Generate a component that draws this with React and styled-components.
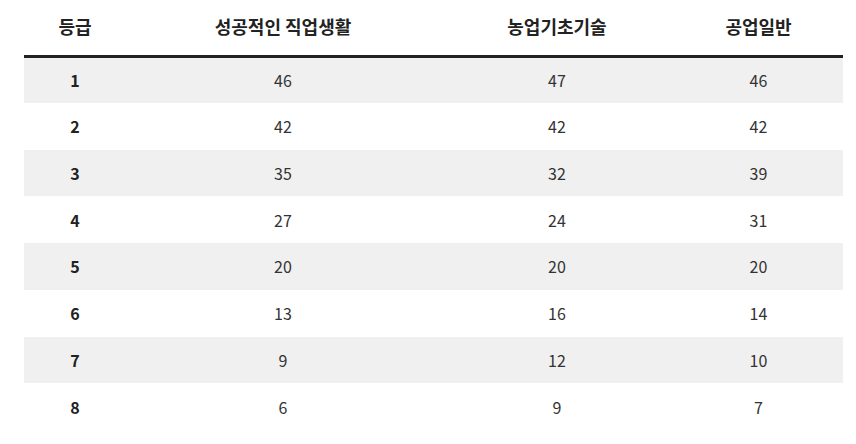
import React from "react";
import styled, { createGlobalStyle } from "styled-components";

const Global = createGlobalStyle`
  html, body { margin: 0; padding: 0; background: #fff; }
  body { font-family: "Noto Sans CJK KR", "Noto Sans", sans-serif; color: #333; }
`;

const Wrap = styled.div`
  padding: 0 13px 0 24px;
`;

const Table = styled.table`
  width: 819px;
  border-collapse: collapse;
  table-layout: fixed;
  font-size: 16px;
`;

const HeadCell = styled.th`
  height: 56px;
  padding: 0 0 2px;
  font-size: 18px;
  font-weight: 700;
  color: #222;
  text-align: center;
  border-bottom: 3px solid #222;
  box-sizing: border-box;
  width: ${(p) => p.$w}px;
`;

const Row = styled.tr`
  background: ${(p) => (p.$shade ? "#f0f0f0" : "#fff")};
  height: 46.75px;
`;

const Cell = styled.td`
  padding: 0;
  text-align: center;
  color: ${(p) => (p.$bold ? "#222" : "#333")};
  font-weight: ${(p) => (p.$bold ? 700 : 400)};
`;

const cols = [
  { label: "등급", w: 102 },
  { label: "성공적인 직업생활", w: 314 },
  { label: "농업기초기술", w: 234 },
  { label: "공업일반", w: 169 },
];

const data = [
  [1, 46, 47, 46],
  [2, 42, 42, 42],
  [3, 35, 32, 39],
  [4, 27, 24, 31],
  [5, 20, 20, 20],
  [6, 13, 16, 14],
  [7, 9, 12, 10],
  [8, 6, 9, 7],
];

export default function App() {
  return (
    <Wrap>
      <Global />
      <Table>
        <thead>
          <tr>
            {cols.map((c) => (
              <HeadCell key={c.label} $w={c.w}>{c.label}</HeadCell>
            ))}
          </tr>
        </thead>
        <tbody>
          {data.map((r, i) => (
            <Row key={r[0]} $shade={i % 2 === 0}>
              {r.map((v, j) => (
                <Cell key={j} $bold={j === 0}>{v}</Cell>
              ))}
            </Row>
          ))}
        </tbody>
      </Table>
    </Wrap>
  );
}
